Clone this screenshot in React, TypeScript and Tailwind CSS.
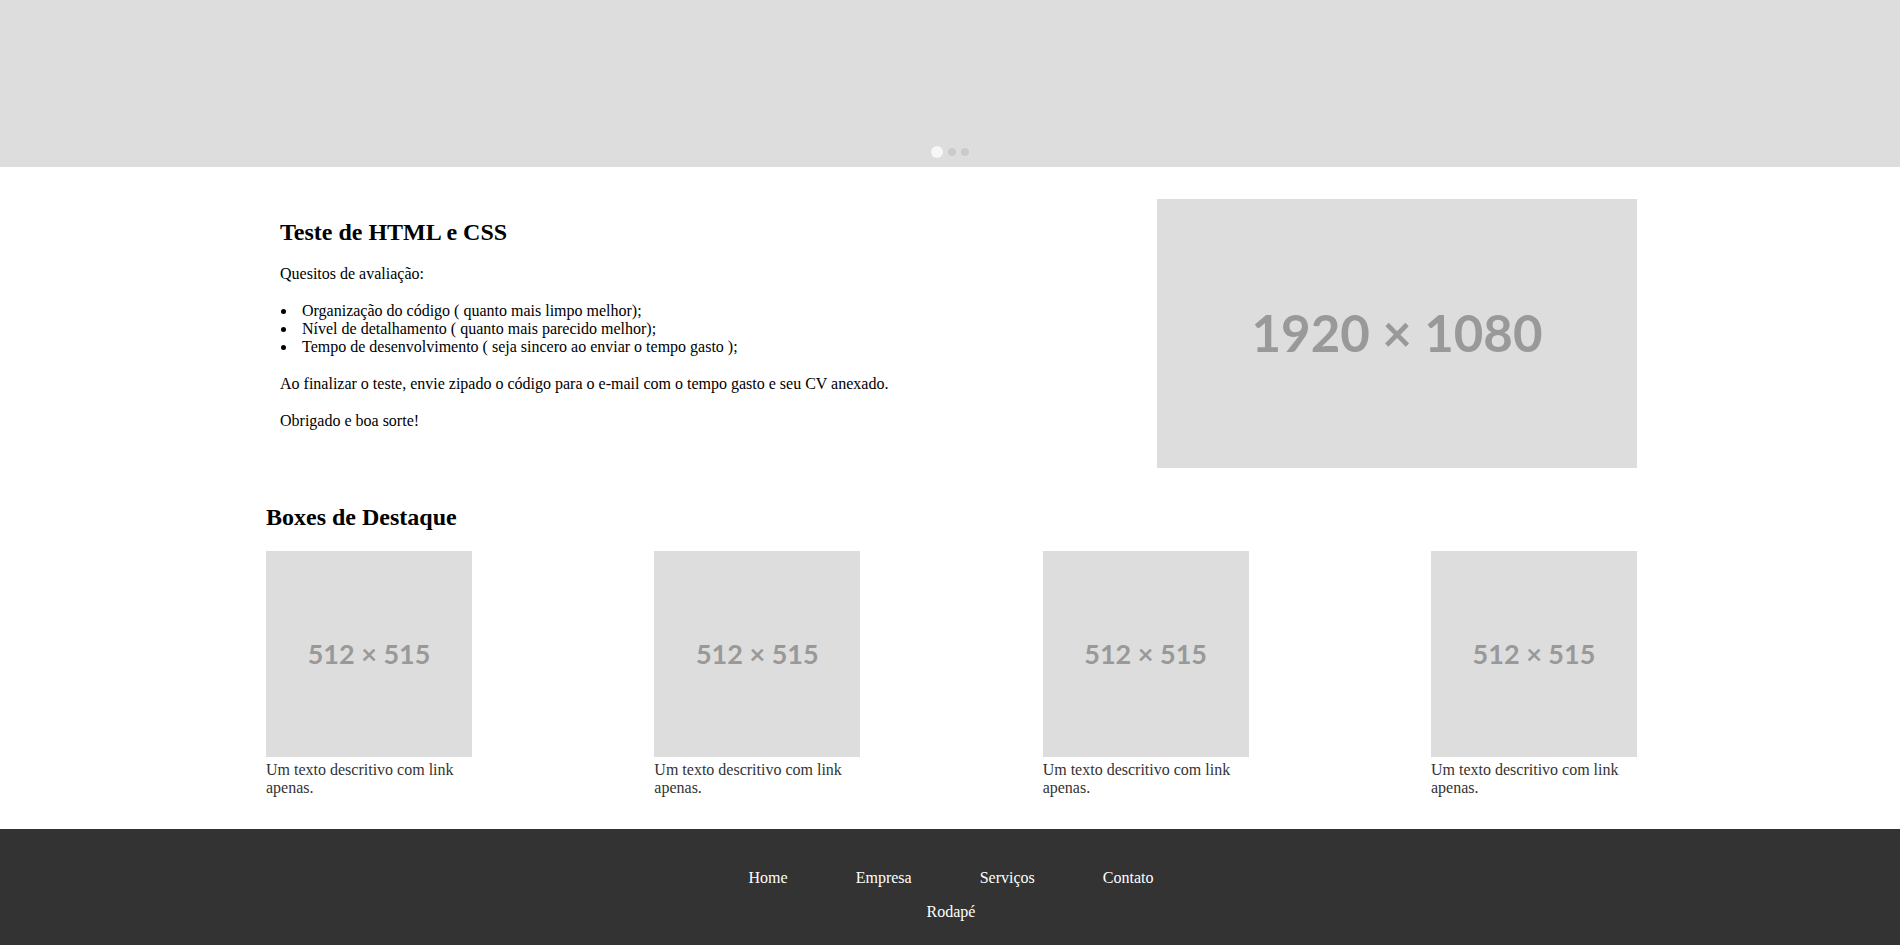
import React from "react";

const navItems = ["Home", "Empresa", "Serviços", "Contato"];
const quesitos = [
  "Organização do código ( quanto mais limpo melhor);",
  "Nível de detalhamento ( quanto mais parecido melhor);",
  "Tempo de desenvolvimento ( seja sincero ao enviar o tempo gasto );",
];

const Placeholder = ({ label, className }: { label: string; className: string }) => (
  <div
    className={`flex items-center justify-center bg-[#dddddd] font-['Lato',sans-serif] font-bold text-[#999999] ${className}`}
  >
    {label}
  </div>
);

const App = () => {
  return (
    <div className="min-h-[945px] bg-white font-['Liberation_Serif',serif] text-[16px] text-black">
      {/* banner / slider */}
      <div className="flex h-[167px] items-end justify-center bg-[#dddddd] pb-[9px]">
        <div className="flex items-center gap-[5px]">
          <span className="h-[12px] w-[12px] rounded-full bg-[#f7f7f7]" />
          <span className="h-[8px] w-[8px] rounded-full bg-[#cacaca]" />
          <span className="h-[8px] w-[8px] rounded-full bg-[#cacaca]" />
        </div>
      </div>

      <main className="ml-[266px] w-[1371px]">
        <section className="flex justify-between pt-[32px]">
          <div className="pl-[14px] pt-[19px]">
            <h2 className="mb-[19px] text-[24px] font-bold leading-[28px]">Teste de HTML e CSS</h2>
            <p className="mb-[19px] leading-[18px]">Quesitos de avaliação:</p>
            <ul className="mb-[19px] leading-[18px]">
              {quesitos.map((q) => (
                <li key={q} className="flex items-center">
                  <span className="ml-[1px] mr-[16px] h-[5px] w-[5px] shrink-0 rounded-full bg-black" />
                  {q}
                </li>
              ))}
            </ul>
            <p className="mb-[19px] leading-[18px]">
              Ao finalizar o teste, envie zipado o código para o e-mail com o tempo gasto e seu CV anexado.
            </p>
            <p className="leading-[18px]">Obrigado e boa sorte!</p>
          </div>
          <Placeholder label="1920 × 1080" className="h-[269px] w-[480px] text-[51px]" />
        </section>

        <section className="pt-[35px]">
          <h2 className="mb-[20px] text-[24px] font-bold leading-[28px]">Boxes de Destaque</h2>
          <div className="flex justify-between">
            {[1, 2, 3, 4].map((n) => (
              <div key={n} className="w-[206px]">
                <Placeholder label="512 × 515" className="h-[206px] w-[206px] text-[27px]" />
                <p className="mt-[4px] leading-[18px] text-[#333333]">Um texto descritivo com link apenas.</p>
              </div>
            ))}
          </div>
        </section>
      </main>

      <footer className="mt-[32px] flex h-[116px] flex-col items-center bg-[#333333] pl-[2px] pt-[40px] text-white">
        <ul className="flex gap-[68px] leading-[18px]">
          {navItems.map((item) => (
            <li key={item}>{item}</li>
          ))}
        </ul>
        <p className="mt-[16px] leading-[18px]">Rodapé</p>
      </footer>
    </div>
  );
};

export default App;
